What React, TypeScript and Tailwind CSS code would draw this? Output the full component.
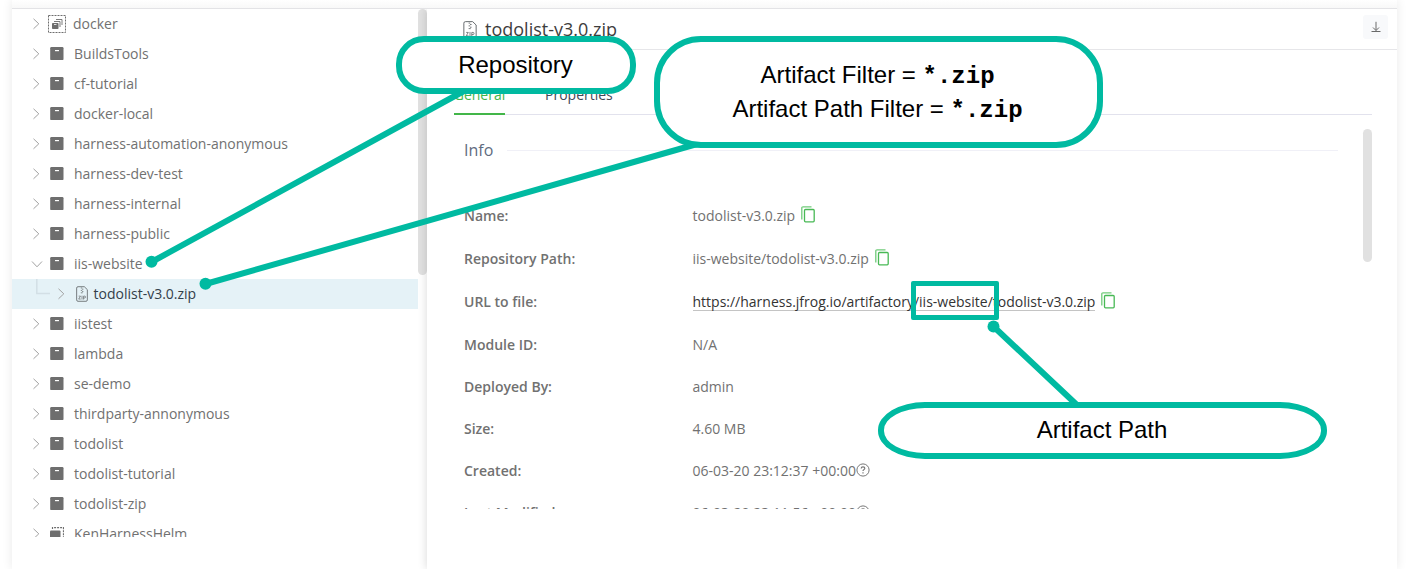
import React from "react";

type Repo = { name: string; kind?: "docker" | "remote" | "file"; open?: boolean };

const repos: Repo[] = [
  { name: "docker", kind: "docker" },
  { name: "BuildsTools" },
  { name: "cf-tutorial" },
  { name: "docker-local" },
  { name: "harness-automation-anonymous" },
  { name: "harness-dev-test" },
  { name: "harness-internal" },
  { name: "harness-public" },
  { name: "iis-website", open: true },
  { name: "todolist-v3.0.zip", kind: "file" },
  { name: "iistest" },
  { name: "lambda" },
  { name: "se-demo" },
  { name: "thirdparty-annonymous" },
  { name: "todolist" },
  { name: "todolist-tutorial" },
  { name: "todolist-zip" },
  { name: "KenHarnessHelm", kind: "remote" },
];

function Chevron({ open }: { open?: boolean }) {
  return (
    <svg width="12" height="12" viewBox="0 0 12 12" fill="none" stroke="#a2a2a2" strokeWidth="1" className="shrink-0">
      {open ? <path d="M1 3.5 6 8.800l5-5.300" /> : <path d="M3.500 .8 8.800 5.800 3.500 10.800" />}
    </svg>
  );
}

function ZipIcon({ width, height }: { width: number; height: number }) {
  return (
    <svg width={width} height={height} viewBox="0 0 13 17" fill="none" stroke="#5f6467" className="shrink-0">
      <path d="M2.2 .6H9l3.3 3.2v11.1q0 1.5-1.5 1.5H2.2Q.7 16.400.7 14.900V2.100Q.7.6 2.200.6Z" strokeWidth=".9" />
      <path d="M5.200 2h1.500M6.500 3.300h1.500M5.200 4.600h1.500M6.500 5.900h1.500M5.200 7.200h2" strokeWidth=".8" />
      <path d="M2.900 10.800h2l-2 3.200h2.200M6.500 10.300v4.200M8.200 14.500v-3.700h1.300q.8 0 .8 1t-.8 1H8.200" strokeWidth=".75" />
    </svg>
  );
}

function RepoIcon({ kind }: { kind?: Repo["kind"] }) {
  if (kind === "docker")
    return (
      <svg width="18" height="18" viewBox="0 0 18 18" fill="none" stroke="#6e6e6e" className="shrink-0">
        <rect x=".5" y=".5" width="17" height="17" strokeDasharray="2 1" />
        <rect x="4" y="8" width="6.500" height="6" rx=".8" fill="#6e6e6e" stroke="none" />
        <path d="M6 6.500h6v5.500M8 4.500h6v5.500" strokeWidth=".9" />
        <path d="M6 9.500h2.500" stroke="#fff" strokeWidth=".8" />
      </svg>
    );
  if (kind === "remote")
    return (
      <svg width="14" height="14" viewBox="0 0 14 14" fill="none" className="shrink-0">
        <rect x="0" y="3.500" width="10.500" height="10.500" rx="1" fill="#6e6e6e" />
        <path d="M2.500 2V.6h11v10.900H12" stroke="#6e6e6e" strokeWidth="1.200" strokeDasharray="2 1" />
      </svg>
    );
  return (
    <svg width="14" height="14" viewBox="0 0 14 14" className="shrink-0">
      <rect x=".2" y=".1" width="13.300" height="13" rx="1.200" fill="#6e6e6e" />
      <path d="M5 3.600h4" stroke="#fff" strokeWidth="1.200" />
    </svg>
  );
}

function TreeRow({ repo }: { repo: Repo }) {
  if (repo.kind === "file")
    return (
      <div className="flex h-[30px] shrink-0 items-center bg-[#e5f2f7] pl-6">
        <svg width="14" height="30" className="shrink-0" fill="none" stroke="#d3dfe5" strokeWidth="1.500">
          <path d="M.8 0v14.500H14" />
        </svg>
        <span className="ml-[5px] flex"><Chevron /></span>
        <span className="ml-[9px] flex"><ZipIcon width={12} height={16} /></span>
        <span className="ml-[5.5px] text-[#33404a]">{repo.name}</span>
      </div>
    );
  return (
    <div className="flex h-[30px] shrink-0 items-center pl-[18px]">
      <span className={repo.open ? "ml-[1px] flex w-[17px]" : "flex w-[18px]"}><Chevron open={repo.open} /></span>
      <span className="flex w-[18px] justify-center"><RepoIcon kind={repo.kind} /></span>
      <span className={repo.kind === "docker" ? "ml-[7px]" : "ml-[8px]"}>{repo.name}</span>
    </div>
  );
}

function CopyIcon() {
  return (
    <svg width="14" height="17" viewBox="0 0 14 17" fill="none" stroke="#48b955" className="mb-[3px] ml-1.5 shrink-0">
      <rect x="3.500" y="3.500" width="9.700" height="12.300" rx="1" strokeWidth="1.300" />
      <path d="M.8 13.500V2Q.8.8 2 .8h8.500" strokeWidth="1.300" stroke="#70cb7a" />
    </svg>
  );
}

function HelpIcon() {
  return (
    <svg width="14" height="14" viewBox="0 0 14 14" fill="none" stroke="#777" strokeWidth="1" className="mb-px shrink-0">
      <circle cx="7" cy="7" r="6.100" />
      <path d="M5.200 5.500q0-1.700 1.800-1.700t1.800 1.500q0 .9-1 1.400-.8.400-.8 1.300M7 9.300v1.200" strokeWidth="1.200" />
    </svg>
  );
}

type Field = { label: string; value: string; icon?: "copy" | "help"; link?: boolean };

const fields: Field[] = [
  { label: "Name:", value: "todolist-v3.0.zip", icon: "copy" },
  { label: "Repository Path:", value: "iis-website/todolist-v3.0.zip", icon: "copy" },
  { label: "URL to file:", value: "https://harness.jfrog.io/artifactory/iis-website/todolist-v3.0.zip", icon: "copy", link: true },
  { label: "Module ID:", value: "N/A" },
  { label: "Deployed By:", value: "admin" },
  { label: "Size:", value: "4.60 MB" },
  { label: "Created:", value: "06-03-20 23:12:37 +00:00", icon: "help" },
  { label: "Last Modified:", value: "06-03-20 23:11:56 +00:00", icon: "help" },
];

function FieldRow({ field }: { field: Field }) {
  return (
    <div className={field.icon === "copy" ? "flex h-[43px] shrink-0 items-center" : "flex h-[42px] shrink-0 items-center"}>
      <span className="w-[228.500px] shrink-0 font-semibold leading-[17px] text-[#717171]">{field.label}</span>
      <span className={field.link ? "-mb-px border-b border-[#c4c4c4] leading-[17px] text-[#333]" : "leading-[17px]"}>{field.value}</span>
      {field.icon === "copy" && <CopyIcon />}
      {field.icon === "help" && <HelpIcon />}
    </div>
  );
}

function Callouts() {
  return (
    <div className="pointer-events-none absolute inset-0 font-['Liberation_Sans',Arial,sans-serif] text-2xl text-black">
      <div className="absolute left-[911px] top-[281px] h-[39px] w-[88px] rounded-[2px] border-5 border-[#00baa1]" />
      <svg width="1411" height="569" className="absolute inset-0" stroke="#00baa1" strokeWidth="6" fill="#00baa1">
        <path d="M151.500 262 464 91M205.500 284 697 144M993.500 326.500 1077 405" fill="none" />
        <g stroke="none">
          <circle cx="151.500" cy="261.700" r="6" />
          <circle cx="205.500" cy="283.700" r="6" />
          <circle cx="993.500" cy="326.500" r="6" />
        </g>
      </svg>
      <div className="absolute left-[396px] top-[36px] flex h-[58px] w-[240px] items-center justify-center rounded-[28px] border-6 border-[#00baa1] bg-white pr-px">
        Repository
      </div>
      <div className="absolute left-[654px] top-[36px] flex h-[112px] w-[449px] flex-col items-center justify-center rounded-[47px] border-6 border-[#00baa1] bg-white pr-0.5 leading-[34px]">
        <div className="h-[34px]">Artifact Filter = <b className="font-['Liberation_Mono','Courier_New',monospace] leading-none">*.zip</b></div>
        <div className="h-[34px]">Artifact Path Filter = <b className="font-['Liberation_Mono','Courier_New',monospace] leading-none">*.zip</b></div>
      </div>
      <div className="absolute left-[878px] top-[402px] flex h-[57px] w-[449px] items-center justify-center rounded-[47px/28px] border-6 border-[#00baa1] bg-white pb-0.5 pr-px">
        Artifact Path
      </div>
    </div>
  );
}

export default function App() {
  return (
    <div className="relative flex h-[569px] w-[1411px] flex-col overflow-hidden bg-white px-3 pr-3.5 font-['Open_Sans',sans-serif] text-sm text-[#717171]">
      <div className="flex h-[569px] flex-col shadow-[0_0_10px_rgba(0,0,0,0.09)]">
        <div className="h-[9px] shrink-0 border-b border-[#e3e3e6] bg-gradient-to-b from-white to-[#f8f8f8]" />
        <div className="flex min-h-0 flex-1">
          <aside className="flex w-[415px] shrink-0">
            <div className="flex h-[528px] w-[406px] flex-col overflow-hidden">
              {repos.map((r) => <TreeRow key={r.name} repo={r} />)}
            </div>
            <div className="h-[266px] w-[9px] rounded-full bg-[#e1e1e1]" />
          </aside>
          <main className="flex min-w-0 flex-1 flex-col shadow-[0_0_9px_rgba(0,0,0,0.16)] [clip-path:inset(0_0_0_-12px)]">
            <header className="flex h-[41px] shrink-0 items-center border-b border-[#e6e6e9] pl-[36px] pr-[9px]">
              <span className="mt-0.5 flex"><ZipIcon width={14} height={18} /></span>
              <h1 className="ml-[8px] text-lg text-[#3d3d3d]">todolist-v3.0.zip</h1>
              <div className="mb-1 ml-auto flex h-6 w-[25px] items-center justify-center rounded-[3px] bg-[#f8f9fb]">
                <svg width="10" height="12" viewBox="0 0 10 12" fill="none" stroke="#6a6a6a" strokeWidth="1">
                  <path d="M5 .8v8.700M2 6.500 5 9.500l3-3M.5 10.500h9" />
                </svg>
              </div>
            </header>
            <nav className="ml-[27px] mr-[25px] mt-[26px] flex h-[39px] shrink-0 border-b border-[#e2e2ed]">
              <span className="flex h-[39px] w-[51px] items-center justify-center border-b-2 border-[#43b649] text-[#43b649]">General</span>
              <span className="ml-10 flex h-[39px] items-center pb-0.5 text-[#414857]">Properties</span>
            </nav>
            <div className="ml-[37px] mr-[25px] flex h-[394px] shrink-0 overflow-hidden">
              <section className="flex min-w-0 flex-1 flex-col">
                <div className="mt-[20px] flex h-[30px] shrink-0 items-center">
                  <h2 className="w-[43px] text-base text-[#5f6c80]">Info</h2>
                  <div className="mr-[25px] h-px flex-1 bg-[#f0f0f7]" />
                </div>
                <div className="mt-[29px] flex flex-col">
                  {fields.map((f) => <FieldRow key={f.label} field={f} />)}
                </div>
              </section>
              <div className="mt-[14px] h-[133px] w-[9px] shrink-0 rounded-full bg-[#e1e1e1]" />
            </div>
          </main>
        </div>
      </div>
      <Callouts />
    </div>
  );
}
